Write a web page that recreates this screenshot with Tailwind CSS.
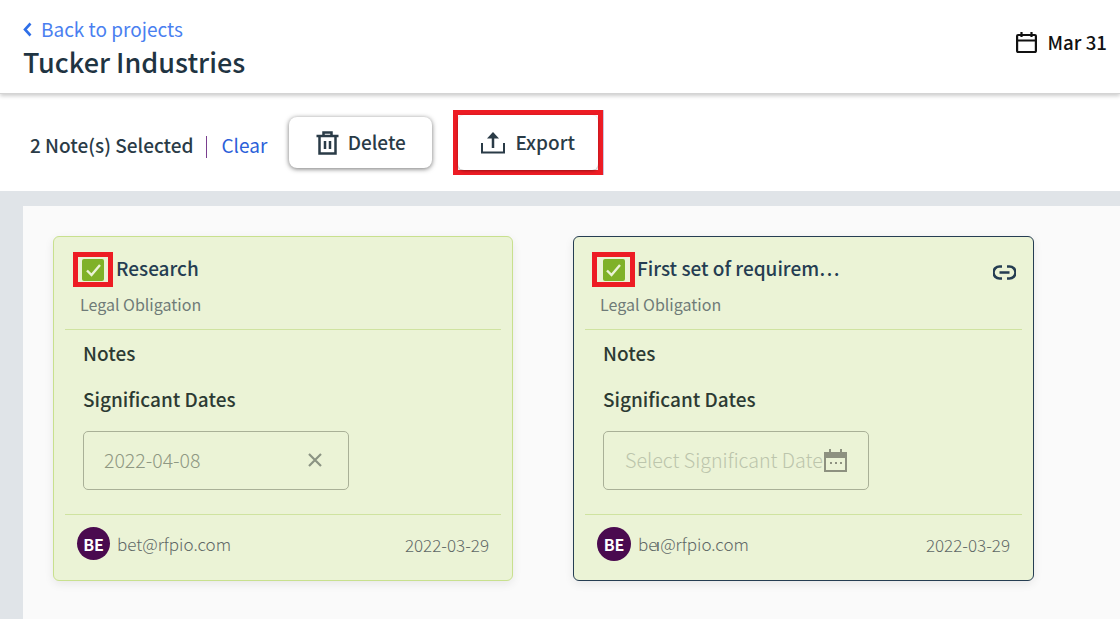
<!DOCTYPE html>
<html lang="en">
<head>
    <meta charset="UTF-8">
    <title>Tucker Industries</title>
    <script src="https://cdn.jsdelivr.net/npm/@tailwindcss/browser@4"></script>
</head>
<body class="h-[619px] w-[1120px] overflow-hidden bg-white font-['Noto_Sans_CJK_SC',sans-serif] text-[#253746]">

    <!-- header -->
    <header class="relative z-10 flex h-[94px] items-start justify-between border-b border-[#d4d4d4] bg-white pl-[23px] pr-[13px] shadow-[0_2px_4px_rgba(0,0,0,0.2)]">
        <div class="pt-[17px]">
            <a class="flex h-[24px] items-center gap-[9px] text-[19px] leading-[24px] text-[#4a7ff0]">
                <svg class="h-[15px] w-[9px]" viewBox="0 0 9 15" fill="none" stroke="#2f6fe8" stroke-width="2.600"><path d="M7.500 1.500 2 7.500l5.500 6"/></svg>
                Back to projects
            </a>
            <h1 class="mt-[3px] text-[27px] leading-[36px] font-medium text-[#1f3442]">Tucker Industries</h1>
        </div>
        <div class="mt-[31px] flex h-[22px] items-center gap-[11px] text-[18.700px] leading-[22px] font-medium text-[#111]">
            <svg class="h-[21px] w-[21px]" viewBox="0 0 21 21" fill="none" stroke="#111" stroke-width="2.200"><rect x="1.100" y="3" width="18.800" height="17" rx="1"/><path d="M1 8.500h19M5.500 0v5M15.500 0v5"/></svg>
            Mar 31
        </div>
    </header>

    <!-- selection toolbar -->
    <div class="flex h-[97px] items-start bg-white pl-[30px]">
        <span class="mt-[39px] text-[19px] leading-[24px] font-medium text-[#2a3b47]">2 Note(s) Selected</span>
        <span class="mt-[42px] ml-[13px] h-[22px] w-px bg-[#7a3f8f]"></span>
        <a class="mt-[39px] ml-[14px] text-[19px] leading-[24px] text-[#2b5fd9]">Clear</a>
        <button class="mt-[23px] ml-[22px] flex h-[51px] w-[143px] items-center justify-center gap-[9px] rounded-[8px] bg-white text-[19px] font-medium text-[#2a3b47] shadow-[0_1px_5px_rgba(0,0,0,0.55)]">
            <svg class="h-[24px] w-[23px]" viewBox="0 0 22 24" fill="none" stroke="#2a3b47" stroke-width="2.500"><path d="M0 5h22M7 4V1.500h8V4M3 5v17.500h16V5"/><path d="M8.500 10v8M13.500 10v8"/></svg>
            Delete
        </button>
        <div class="relative mt-[16px] ml-[21px] flex h-[65px] w-[150px] items-center justify-center border-[5px] border-[#ed1c24] shadow-[1px_0_0_#c9c4e0]">
            <button class="flex h-full w-full items-center justify-center gap-[10px] rounded-[6px] bg-white text-[19px] font-medium text-[#2a3b47] shadow-[0_1px_3px_rgba(0,0,0,0.35)]">
                <svg class="h-[22px] w-[24px]" viewBox="0 0 24 22" fill="none" stroke="#2a3b47" stroke-width="2"><path d="M1 11v9.500h22V11"/><path d="M12 16V3" stroke-width="2.500"/><path d="M12 0l6 6.500H6z" fill="#2a3b47" stroke="none"/></svg>
                Export
            </button>
        </div>
    </div>

    <!-- notes area -->
    <main class="h-[428px] bg-[#e0e4e8] pt-[15px] pl-[23px]">
        <div class="flex h-[413px] items-start gap-[60px] bg-[#fafafa] pt-[30px] pl-[30px]">

            <!-- card 1 -->
            <article class="grid h-[345px] w-[460px] grid-rows-[93px_185px_65px] rounded-[6px] border border-[#c8e08e] bg-[#ebf3d6] px-[11px] shadow-[0_3px_10px_rgba(0,0,0,0.08)]">
                <div class="relative border-b border-[#cfe3a0]">
                    <div class="flex items-start pt-[15px] pl-[8px]">
                        <span class="flex h-[35px] w-[40px] items-center justify-center border-[5px] border-[#ed1c24]">
                            <span class="flex h-[22px] w-[22px] items-center justify-center rounded-[2px] bg-[#7fb128]">
                                <svg class="h-[14px] w-[17px]" viewBox="0 0 16 14" fill="none" stroke="#ebf3d6" stroke-width="2.400"><path d="M1.500 7.500 6 12l8.500-10"/></svg>
                            </span>
                        </span>
                        <h2 class="mt-[3px] ml-[3px] text-[19px] leading-[26px] font-medium text-[#253d52]">Research</h2>
                    </div>
                    <p class="mt-[6px] pl-[15px] text-[16px] leading-[22px] text-[#6f7b78]">Legal Obligation</p>
                </div>
                <div class="border-b border-[#cfe3a0] pl-[18px]">
                    <h3 class="mt-[10px] text-[19px] leading-[26px] font-medium text-[#2c3a33]">Notes</h3>
                    <h3 class="mt-[20px] text-[19px] leading-[26px] font-medium text-[#2c3a33]">Significant Dates</h3>
                    <div class="mt-[19px] flex h-[59px] w-[266px] items-center justify-between rounded-[5px] border border-[#a9b097] pr-[26px] pb-[1px] pl-[20px] text-[19.500px] font-light text-[#8f9883]">
                        2022-04-08
                        <svg class="h-[14px] w-[14px]" viewBox="0 0 14 14" fill="none" stroke="#8b9483" stroke-width="2.200"><path d="M1 1l12 12M13 1 1 13"/></svg>
                    </div>
                </div>
                <div class="flex items-start justify-between pt-[12px] pr-[12px] pl-[12px]">
                    <div class="flex items-center gap-[7px]">
                        <span class="flex h-[33px] w-[33px] items-center justify-center rounded-full bg-[#4a0a4f] text-[16px] font-bold text-white">BE</span>
                        <span class="text-[17px] leading-[22px] font-light text-[#5f6866]">bet@rfpio.com</span>
                    </div>
                    <span class="mt-[7px] text-[17px] leading-[22px] font-light text-[#5f6866]">2022-03-29</span>
                </div>
            </article>

            <!-- card 2 -->
            <article class="grid h-[345px] w-[461px] grid-rows-[93px_185px_65px] rounded-[6px] border border-[#253d52] bg-[#ebf3d6] px-[11px] shadow-[0_3px_10px_rgba(0,0,0,0.08)]">
                <div class="relative border-b border-[#cfe3a0]">
                    <div class="flex items-start pt-[15px] pl-[7px]">
                        <span class="flex h-[35px] w-[43px] items-center justify-center border-[5px] border-[#ed1c24]">
                            <span class="flex h-[22px] w-[22px] items-center justify-center rounded-[2px] bg-[#7fb128]">
                                <svg class="h-[14px] w-[17px]" viewBox="0 0 16 14" fill="none" stroke="#ebf3d6" stroke-width="2.400"><path d="M1.500 7.500 6 12l8.500-10"/></svg>
                            </span>
                        </span>
                        <h2 class="mt-[3px] ml-[2px] text-[19px] leading-[26px] font-medium text-[#253d52]">First set of requirem…</h2>
                        <svg class="absolute top-[28px] right-[6px] h-[15px] w-[23px]" viewBox="0 0 23 15" fill="none" stroke="#253d52" stroke-width="2.600"><path d="M9 1.500H6.500a6 6 0 0 0 0 12H9M14 1.500h2.500a6 6 0 0 1 0 12H14M6.500 7.500h10"/></svg>
                    </div>
                    <p class="mt-[6px] pl-[15px] text-[16px] leading-[22px] text-[#6f7b78]">Legal Obligation</p>
                </div>
                <div class="border-b border-[#cfe3a0] pl-[18px]">
                    <h3 class="mt-[10px] text-[19px] leading-[26px] font-medium text-[#2c3a33]">Notes</h3>
                    <h3 class="mt-[20px] text-[19px] leading-[26px] font-medium text-[#2c3a33]">Significant Dates</h3>
                    <div class="mt-[19px] flex h-[59px] w-[266px] items-center rounded-[5px] border border-[#a9b097] pl-[21px] text-[19.700px] font-light text-[#bcc5ac]">
                        <span class="pb-[1px]">Select Significant Date</span>
                        <svg class="ml-[1px] h-[23px] w-[23px]" viewBox="0 0 23 23"><path d="M0 3h5V0h2v3h9V0h2v3h5v20H0z" fill="#8d9180"/><rect x="2" y="9" width="19" height="12" fill="#ebf3d6"/><path d="M6 13h2v2H6zM11 13h2v2h-2zM16 13h2v2h-2z" fill="#8d9180"/></svg>
                    </div>
                </div>
                <div class="flex items-start justify-between pt-[12px] pr-[12px] pl-[12px]">
                    <div class="flex items-center gap-[7px]">
                        <span class="flex h-[34px] w-[34px] items-center justify-center rounded-full bg-[#4a0a4f] text-[16px] font-bold text-white">BE</span>
                        <span class="text-[17px] leading-[22px] font-light text-[#5f6866]">be<span class="-ml-[2px]">ı</span>@rfpio.com</span>
                    </div>
                    <span class="mt-[7px] text-[17px] leading-[22px] font-light text-[#5f6866]">2022-03-29</span>
                </div>
            </article>
        </div>
    </main>
</body>
</html>
